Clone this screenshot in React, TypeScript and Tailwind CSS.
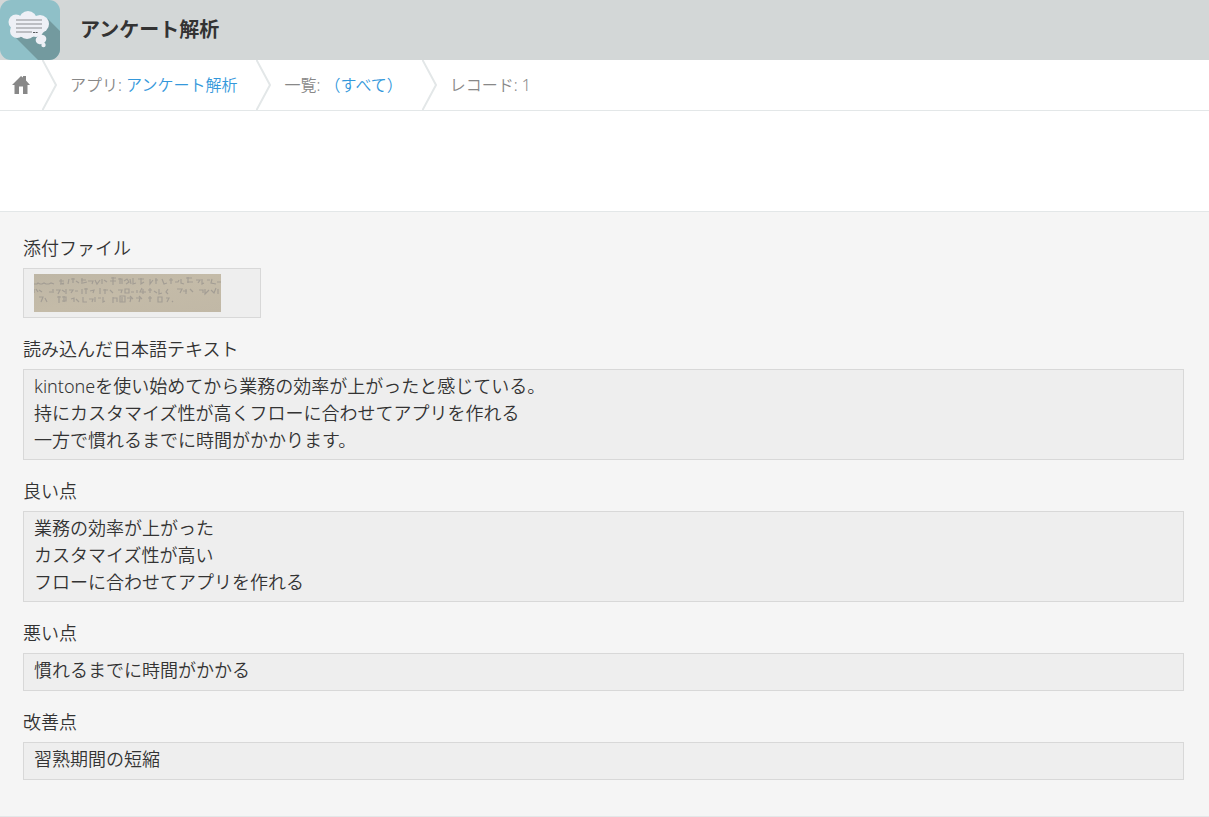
type Field = {
  label: string;
  lines: string[];
};

const fields: Field[] = [
  {
    label: "読み込んだ日本語テキスト",
    lines: [
      "kintoneを使い始めてから業務の効率が上がったと感じている。",
      "持にカスタマイズ性が高くフローに合わせてアプリを作れる",
      "一方で慣れるまでに時間がかかります。",
    ],
  },
  {
    label: "良い点",
    lines: ["業務の効率が上がった", "カスタマイズ性が高い", "フローに合わせてアプリを作れる"],
  },
  { label: "悪い点", lines: ["慣れるまでに時間がかかる"] },
  { label: "改善点", lines: ["習熟期間の短縮"] },
];

function AppIcon() {
  return (
    <svg viewBox="0 0 60 60" className="size-15 shrink-0" aria-hidden="true">
      <defs>
        <clipPath id="tile">
          <rect width="60" height="60" rx="11" />
        </clipPath>
      </defs>
      <g clipPath="url(#tile)">
        <rect width="60" height="60" fill="#8fc0c8" />
        <path d="M13 35 L38 60 H60 V31 L48 19 L40 36 Z" fill="#739a9f" />
      </g>
      <g fill="#eef0f6">
        <circle cx="16" cy="22" r="7.5" />
        <circle cx="28" cy="20" r="9" />
        <circle cx="40" cy="24" r="9" />
        <circle cx="17" cy="31" r="7" />
        <circle cx="27" cy="30" r="9" />
        <circle cx="36" cy="29" r="8" />
        <ellipse cx="41" cy="39.5" rx="5.5" ry="4.5" transform="rotate(-25 41 39.5)" />
        <circle cx="43.5" cy="45" r="2.2" />
      </g>
      <path d="M16 20H42M16 24H42M16 28H42M16 32H32" stroke="#bcbec3" strokeWidth="2" />
      <path d="M33 32.5H38" stroke="#55585c" strokeDasharray="2 .6" />
    </svg>
  );
}

function Chevron() {
  return (
    <svg viewBox="0 0 15 50" className="h-[50px] w-[15px] shrink-0" aria-hidden="true">
      <path d="M0 -1 L14 25 L0 51" fill="none" stroke="#e3e7e8" strokeWidth="2" />
    </svg>
  );
}

function HomeIcon() {
  return (
    <svg viewBox="0 0 18 18" className="size-[18px]" aria-hidden="true">
      <path d="M9 0 L11 1.5 V0 H14 V4.5 L18 9 H15.5 V18 H11 V10.5 H7 V18 H2.5 V9 H0 Z" fill="#888" />
    </svg>
  );
}

// Photo of a handwritten questionnaire
function Thumbnail() {
  return (
    <svg viewBox="0 0 187 38" className="h-[38px] w-[187px]" role="img" aria-label="添付ファイル">
      <defs>
        <linearGradient id="paper" x1="0" x2="1" y1="0" y2="1">
          <stop offset="0" stopColor="#beb6a5" />
          <stop offset="0.5" stopColor="#c4bba8" />
          <stop offset="1" stopColor="#c1b8a6" />
        </linearGradient>
        <filter id="soft">
          <feGaussianBlur stdDeviation="0.7" />
        </filter>
      </defs>
      <rect width="187" height="38" fill="url(#paper)" />
      <g fill="none" stroke="#8f8b88" strokeWidth="1.2" opacity="0.6" filter="url(#soft)">
        <path d="M0 10h3l1-1 2 1h2l2-1 2 1h3l2-1 3 1M25 7h5M27 5v5l3-1M26 10h4M35 5l-1 5M37 5h4M39 4v5M42 7l3 2M47 6h5M48 4v6M49 9l4-1M54 7h5l-1 3M61 6l2 4 3-4M68 5v5M70 6l3 2M77 4h5M76 7h6M79 3v8M84 5h4v5M86 4v6M90 7l3-2 2 3-3 2M96 5l1 5M99 4v6l3-1M104 5h6M107 4v6l3-2M116 5v5l3-4M121 6h3M122 4v6M128 5l2 5 3-1M135 6h4M137 4v6M141 8h3l1-2M147 5v4l3 1M152 4h6M154 3v6M153 8h6M162 6h4l-2 3M168 5v5l2-1M173 6h3M178 5l-1 4 5 1M183 8h4" />
        <path d="M0 15v4M2 15l2 3M5 16l3 2M15 18h3M19 15v4M22 16h4l-2 4M28 16l3 2M32 15v5M35 16h4l-2 3M41 17h3M48 15v5M50 15h4M52 14v6M56 17l4-1-1 3M66 14v6M69 16h5M71 15v5M76 16l3 3M84 16h4l-1 3M91 15h4v4h-4zM97 18h3M103 16v3M108 14l-2 4h6M109 15v5M114 16h4M116 14v5M120 17l3 2M125 15v5l3-1M134 15l-2 3 2 2M143 15h5l-2 4M149 17h4M152 15v5M156 15l3 3M165 16h4v3M171 15v5l4-4M177 16l3 3 2-5M184 15v5" />
        <path d="M5 23h4l-2 5M11 24l2 4M23 23h4M25 22v7M28 23h4v4h-4M30 22v6M37 25l3-1v4M42 25l3 3M49 23v5h4M55 25h4l-1 3M61 23v5M64 24h3M69 23v5l2-1M79 23v6M79 24h4v4M86 22h5v6h-5zM88 23v5M93 24h4l-1 4M96 22l3 3M102 24h4l-1 4M105 22l3 3M114 24h4M116 22v6M124 23h4v5h-4zM132 24h3l-2 4M138 27l1 1" />
      </g>
    </svg>
  );
}

export default function App() {
  return (
    <div className="bg-white font-['Noto_Sans','Noto_Sans_CJK_JP',sans-serif] text-[#333]">
      <header className="flex items-center gap-5 bg-[#d3d7d7]">
        <AppIcon />
        <h1 className="text-xl font-bold">アンケート解析</h1>
      </header>

      <nav className="border-b border-[#e3e7e8] text-base font-[350] text-[#888]">
        <ol className="flex items-center">
          <li className="flex items-center">
            <a href="#home" aria-label="ホーム" className="px-3">
              <HomeIcon />
            </a>
            <Chevron />
          </li>
          <li className="flex items-center">
            <span className="pr-[19px] pl-[13px]">
              アプリ:{" "}
              <a href="#app" className="text-[#3498db]">
                アンケート解析
              </a>
            </span>
            <Chevron />
          </li>
          <li className="flex items-center">
            <span className="pr-[19px] pl-[13px]">
              一覧:{" "}
              <a href="#list" className="text-[#3498db]">
                （すべて）
              </a>
            </span>
            <Chevron />
          </li>
          <li className="pl-[13px]">レコード: 1</li>
        </ol>
      </nav>

      <div className="h-25" />

      <main className="border-y border-[#e3e7e8] bg-[#f5f5f5] pt-6 pr-[25px] pb-9 pl-[23px]">
        <dl className="flex flex-col gap-[19px] text-lg font-[350]">
          <div>
            <dt className="mb-2 leading-6">添付ファイル</dt>
            <dd className="h-[50px] w-[238px] border border-[#d8d8d8] bg-[#eee] px-[10px] py-[5px]">
              <Thumbnail />
            </dd>
          </div>
          {fields.map((field) => (
            <div key={field.label}>
              <dt className="mb-2 leading-6">{field.label}</dt>
              <dd className="min-h-[38px] border border-[#d8d8d8] bg-[#eee] px-[10px] pt-[3px] pb-[5px] leading-[27px]">
                {field.lines.map((line) => (
                  <p key={line}>{line}</p>
                ))}
              </dd>
            </div>
          ))}
        </dl>
      </main>
    </div>
  );
}
